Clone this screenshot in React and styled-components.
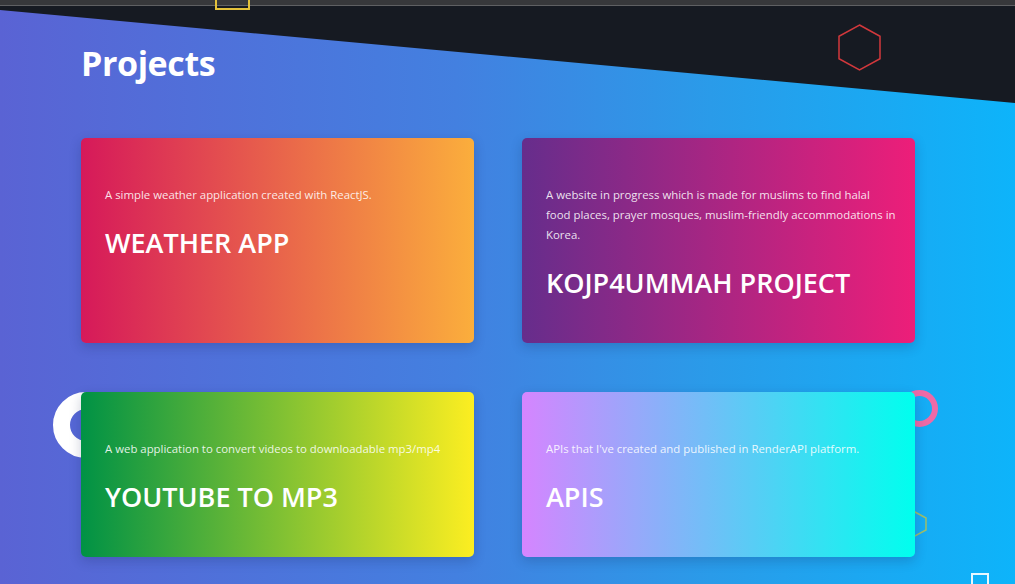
import React from "react";
import styled, { createGlobalStyle } from "styled-components";

const GlobalStyle = createGlobalStyle`
  html, body {
    margin: 0;
    padding: 0;
    background: #161a22;
  }
  body {
    font-family: "Open Sans", "Noto Sans", "Liberation Sans", sans-serif;
  }
`;

const Page = styled.div`
  position: relative;
  width: 1015px;
  height: 584px;
  overflow: hidden;
  background: linear-gradient(90deg, #5a63d4 0%, #4380e0 45%, #2a9be9 70%, #0db4fa 100%);
`;

const TopBar = styled.div`
  position: relative;
  z-index: 3;
  height: 5px;
  background: #37383b;
  border-bottom: 1px solid #5f6063;
`;

// dark slanted band behind the heading
const DarkSlope = styled.div`
  position: absolute;
  inset: 0;
  background: #161a22;
  clip-path: polygon(0 0, 100% 0, 100% 103px, 0 10px);
  z-index: 0;
`;

const Content = styled.section`
  position: relative;
  z-index: 2;
  padding: 37px 0 0 81px;
`;

const Heading = styled.h1`
  margin: 0;
  color: #fff;
  font-size: 34px;
  line-height: 40px;
  font-weight: 700;
  letter-spacing: -0.4px;
`;

const Grid = styled.div`
  display: grid;
  grid-template-columns: 393px 393px;
  column-gap: 48px;
  row-gap: 49px;
  margin-top: 55px;
`;

const gradients = {
  sunset: "linear-gradient(90deg, #d6195a 0%, #fbae3c 100%)",
  grape: "linear-gradient(90deg, #662d8c 0%, #ed1e79 100%)",
  lime: "linear-gradient(90deg, #009245 0%, #fcee21 100%)",
  aqua: "linear-gradient(90deg, #d585ff 0%, #00ffee 100%)",
};

const Card = styled.article`
  background: ${p => gradients[p.$tone]};
  border-radius: 5px;
  padding: 47px 19px 44px 24px;
  box-shadow: 0 4px 12px rgba(20, 30, 80, 0.22);
  color: #fff;
`;

const Desc = styled.p`
  margin: 0;
  font-size: 11.4px;
  line-height: 20px;
  color: rgba(255, 255, 255, 0.88);
`;

const Title = styled.h2`
  margin: 22px 0 0;
  font-size: 27px;
  line-height: 32px;
  font-weight: 600;
  text-transform: uppercase;
`;

const Ring = styled.div`
  position: absolute;
  z-index: 1;
  left: ${p => p.$x}px;
  top: ${p => p.$y}px;
  width: ${p => p.$size}px;
  height: ${p => p.$size}px;
  box-sizing: border-box;
  border-radius: 50%;
  border: ${p => p.$w}px solid ${p => p.$color};
`;

const Square = styled.div`
  position: absolute;
  z-index: ${p => p.$z || 1};
  left: ${p => p.$x}px;
  top: ${p => p.$y}px;
  width: ${p => p.$size}px;
  height: ${p => p.$size}px;
  box-sizing: border-box;
  border: 2px solid ${p => p.$color};
`;

const Shape = styled.svg`
  position: absolute;
  z-index: 1;
  left: ${p => p.$x}px;
  top: ${p => p.$y}px;
  overflow: visible;
`;

const Hexagon = ({ x, y, w, h, color, stroke }) => (
  <Shape $x={x} $y={y} width={w} height={h} viewBox={`0 0 ${w} ${h}`}>
    <polygon
      points={`${w / 2},0 ${w},${h / 4} ${w},${(h * 3) / 4} ${w / 2},${h} 0,${(h * 3) / 4} 0,${h / 4}`}
      fill="none"
      stroke={color}
      strokeWidth={stroke}
    />
  </Shape>
);

const projects = [
  { tone: "sunset", desc: "A simple weather application created with ReactJS.", title: "Weather App" },
  {
    tone: "grape",
    desc: "A website in progress which is made for muslims to find halal food places, prayer mosques, muslim-friendly accommodations in Korea.",
    title: "KOJP4UMMAH Project",
  },
  { tone: "lime", desc: "A web application to convert videos to downloadable mp3/mp4", title: "Youtube to MP3" },
  { tone: "aqua", desc: "APIs that I've created and published in RenderAPI platform.", title: "APIs" },
];

export default function App() {
  return (
    <>
      <GlobalStyle />
      <Page>
        <DarkSlope />
        <TopBar />
        <Square $x={215} $y={-25} $size={35} $color="#e3c13a" $z={4} />
        <Hexagon x={839} y={25} w={41} h={45} color="#d2383c" stroke={1.5} />
        <Ring $x={53} $y={392} $size={66} $w={17} $color="#ffffff" />
        <Ring $x={901} $y={390} $size={37} $w={6} $color="#ee6aa7" />
        <Hexagon x={904} y={512} w={22} h={24} color="#9fbf6a" stroke={1.5} />
        <Square $x={971} $y={573} $size={18} $color="rgba(255,255,255,0.9)" />
        <Content>
          <Heading>Projects</Heading>
          <Grid>
            {projects.map(p => (
              <Card key={p.title} $tone={p.tone}>
                <Desc>{p.desc}</Desc>
                <Title>{p.title}</Title>
              </Card>
            ))}
          </Grid>
        </Content>
      </Page>
    </>
  );
}
